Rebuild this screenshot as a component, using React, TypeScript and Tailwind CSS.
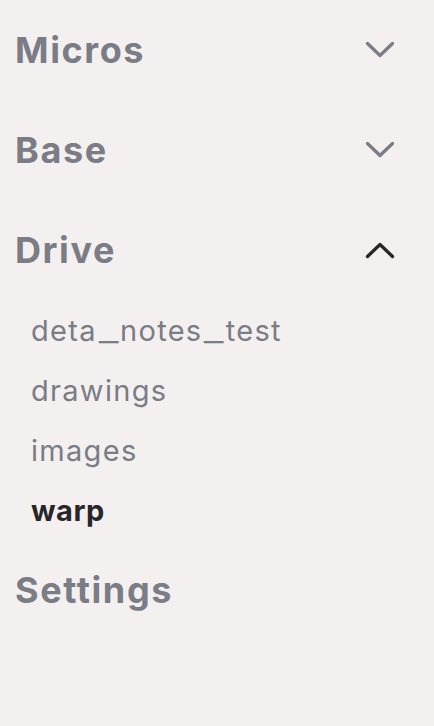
import React from "react";

function Chevron({ up, dark }: { up?: boolean; dark?: boolean }) {
  return (
    <svg width="30" height="18" viewBox="0 0 30 18" fill="none" className={dark ? "text-[#27272a]" : "text-[#7a7c86]"}>
      <path
        d={up ? "M2.5 15.5 L15 3.5 L27.5 15.5" : "M2.5 2.5 L15 14.5 L27.5 2.5"}
        stroke="currentColor"
        strokeWidth="3.3"
        strokeLinecap="round"
        strokeLinejoin="round"
      />
    </svg>
  );
}

function Heading({ label, chevron, up }: { label: string; chevron?: boolean; up?: boolean }) {
  return (
    <div className="flex h-[100px] items-center justify-between pl-[15px] pr-[39px]">
      <span className="text-[36px] font-bold leading-none tracking-[1.6px] text-[#7a7c86]">{label}</span>
      {chevron && <Chevron up={up} dark={up} />}
    </div>
  );
}

function Item({ label, active }: { label: string; active?: boolean }) {
  const parts = label.split("_");
  return (
    <div className="flex h-[60px] items-center pl-[31px]">
      <span
        className={
          "text-[29px] leading-none " +
          (active ? "font-bold tracking-[0.5px] text-[#27272a]" : "font-normal tracking-[1.3px] text-[#7a7c86]")
        }
      >
        {parts.map((p, i) => (
          <React.Fragment key={i}>
            {i > 0 && <span className="mx-[5px] inline-block scale-x-150 tracking-normal">_</span>}
            {p}
          </React.Fragment>
        ))}
      </span>
    </div>
  );
}

export default function App() {
  return (
    <div className="min-h-[726px] w-[434px] bg-[#f4f0ef]" style={{ fontFamily: "Inter, 'Noto Sans', sans-serif" }}>
      <Heading label="Micros" chevron />
      <Heading label="Base" chevron />
      <Heading label="Drive" chevron up />
      <Item label="deta_notes_test" />
      <Item label="drawings" />
      <Item label="images" />
      <Item label="warp" active />
      <Heading label="Settings" />
    </div>
  );
}
